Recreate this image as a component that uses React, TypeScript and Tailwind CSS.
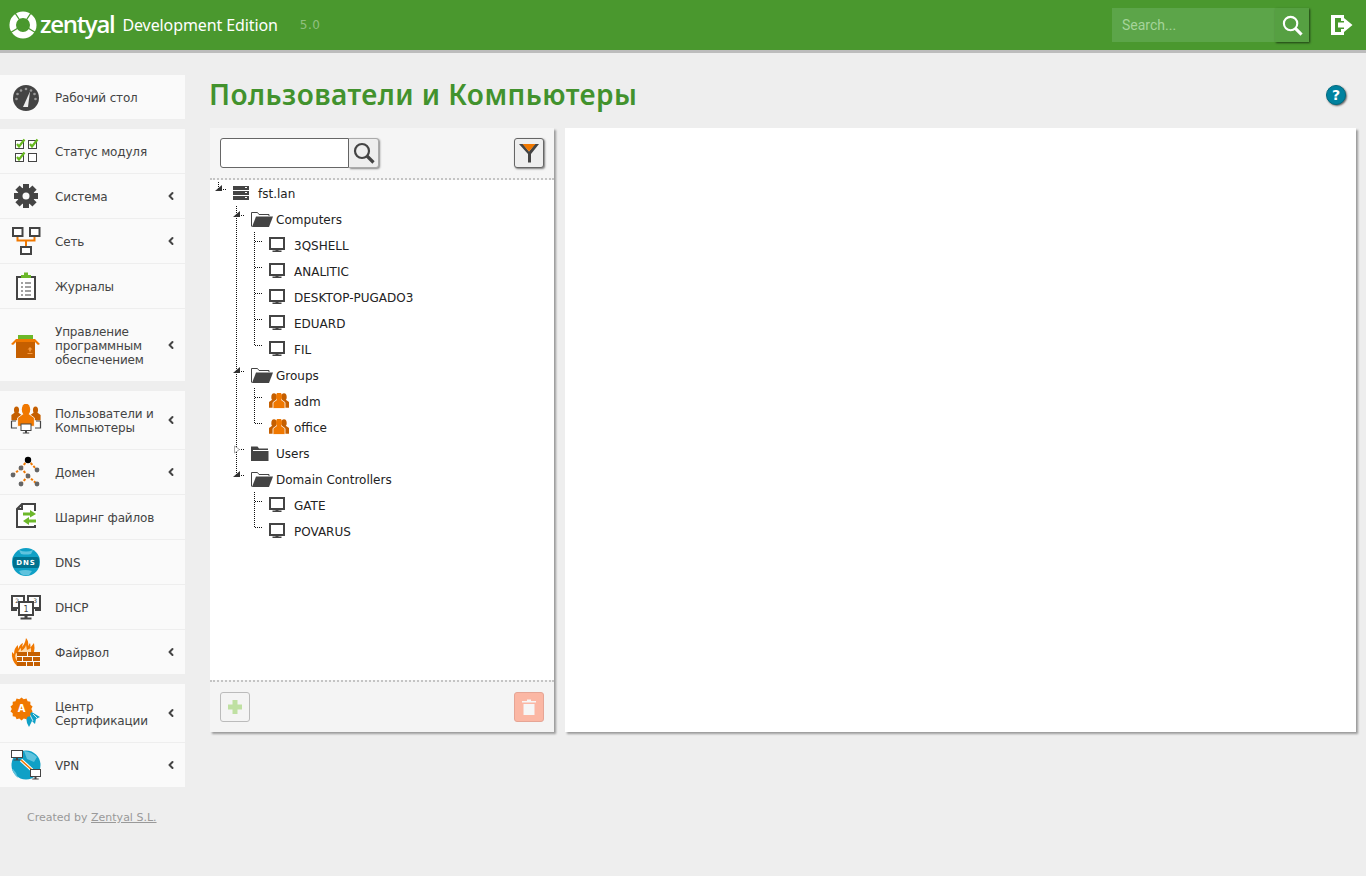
import { ChevronLeft } from "lucide-react";
import type { ReactNode } from "react";

const Ico = ({ children }: { children: ReactNode }) => (
  <svg width="32" height="32" viewBox="0 0 32 32" className="block">
    {children}
  </svg>
);

const GaugeIcon = () => (
  <Ico>
    <circle cx="16" cy="17" r="13" fill="#444" />
    {[[6.5, 18], [7.5, 13], [11, 9.5], [16, 8], [21, 9.5], [24.5, 13], [25.5, 18]].map(([x, y], i) => (
      <circle key={i} cx={x} cy={y} r="1.3" fill="#999" />
    ))}
    <path d="M13 26 L20 10.5 L18 26 Z" fill="#eee" />
  </Ico>
);

const CheckBox = ({ x, y, on }: { x: number; y: number; on: boolean }) => (
  <g>
    <rect x={x + 0.5} y={y + 1.5} width="8" height="8" fill="#fff" stroke="#444" />
    {on && <path d={`M${x + 2} ${y + 5} l2 2.5 l5.5 -7`} fill="none" stroke="#66b81f" strokeWidth="2.2" />}
  </g>
);

const StatusIcon = () => (
  <Ico>
    <CheckBox x={5} y={4} on />
    <CheckBox x={18} y={4} on />
    <CheckBox x={5} y={17} on />
    <CheckBox x={18} y={17} on={false} />
  </Ico>
);

const GearIcon = () => (
  <Ico>
    {[0, 45, 90, 135].map((r) => (
      <rect key={r} x="13" y="4" width="6" height="24" fill="#444" transform={`rotate(${r} 16 16)`} />
    ))}
    <circle cx="16" cy="16" r="8.5" fill="#444" />
    <circle cx="16" cy="16" r="3.5" fill="#fafafa" />
  </Ico>
);

const NetIcon = () => (
  <Ico>
    <rect x="3" y="3" width="9.5" height="8" fill="#fff" stroke="#444" strokeWidth="2" />
    <rect x="20" y="3" width="9.5" height="8" fill="#fff" stroke="#444" strokeWidth="2" />
    <rect x="11" y="22" width="10" height="7" fill="#fff" stroke="#444" strokeWidth="2" />
    <path d="M7.5 12 V15.5 H24.5 V12 M16 15.5 V21" fill="none" stroke="#f07800" strokeWidth="2" />
  </Ico>
);

const JournalIcon = () => (
  <Ico>
    <rect x="7" y="7" width="18" height="22" fill="#fff" stroke="#444" strokeWidth="2" />
    <path d="M11 8 V5 H14 V2.5 H18 V5 H21 V8 Z" fill="#6cb82a" />
    <path d="M11 13 h2 M15 13 h6 M11 17 h2 M15 17 h6 M11 21 h2 M15 21 h6 M11 25 h2 M15 25 h6" stroke="#444" strokeWidth="1.2" />
  </Ico>
);

const BoxIcon = () => (
  <Ico>
    <rect x="8" y="6" width="15" height="4" fill="#6cb82a" />
    <rect x="6" y="10" width="19" height="19" fill="#c55f00" />
    <path d="M6 10 H25 L30 15 L28 16 L25 13 H6 L3 16 L1 15 Z" fill="#f07800" />
    <path d="M20 18 l-2.5 2.5 h1.7 v2 h1.6 v-2 h1.7 Z M17.5 24 h5 v1 h-5 Z" fill="#f79a3e" />
  </Ico>
);

const Person = ({ x, y, s, fill, ring }: { x: number; y: number; s: number; fill: string; ring?: boolean }) => (
  <g fill={fill} stroke={ring ? "#fff" : "none"} strokeWidth={ring ? 0.8 : 0}>
    <path d={`M${x - 2 * s} ${y + 3 * s} L${x - 6 * s} ${y + 6 * s} V${y + 12 * s} H${x + 6 * s} V${y + 6 * s} L${x + 2 * s} ${y + 3 * s} Z`} />
    <ellipse cx={x} cy={y} rx={3 * s} ry={4.2 * s} stroke="none" />
  </g>
);

const Mon = ({ x, y, w, h, sw = 1 }: { x: number; y: number; w: number; h: number; sw?: number }) => (
  <g>
    <rect x={x + sw / 2} y={y + sw / 2} width={w - sw} height={h - sw} fill="#fff" stroke="#444" strokeWidth={sw} />
    <path d={`M${x + w / 2 - 1} ${y + h} h2 v1.5 h${w / 5} v1 h-${2 + (2 * w) / 5} v-1 h${w / 5} Z`} fill="#444" />
  </g>
);

const UsersCompIcon = () => (
  <Ico>
    <Person x={6.5} y={6} s={0.85} fill="#c55f00" />
    <Person x={25.5} y={6} s={0.85} fill="#c55f00" />
    <Person x={16} y={5.5} s={1.4} fill="#f07800" ring />
    <path d="M1.5 17 H6 M1.5 17 V24 H7 M30.5 17 H26 M30.5 17 V24 H25" fill="none" stroke="#444" strokeWidth="1.2" />
    <Mon x={10.5} y={19.5} w={11} h={7.5} />
  </Ico>
);

const DomainIcon = () => {
  const lines = [[18, 4, 11, 12], [18, 4, 27, 14], [11, 12, 3, 19], [11, 12, 18, 20], [18, 20, 11, 28], [18, 20, 27, 28]];
  const nodes = [[11, 12], [27, 14], [3, 19], [18, 20], [11, 28], [27, 28]];
  return (
    <Ico>
      {lines.map(([a, b, c, d], i) => (
        <line key={i} x1={a} y1={b} x2={c} y2={d} stroke="#f07800" strokeWidth="2" strokeDasharray="2.5 1.5" />
      ))}
      {nodes.map(([x, y], i) => (
        <circle key={i} cx={x} cy={y} r="2.4" fill="#666" />
      ))}
      <circle cx="18" cy="4" r="3.2" fill="#000" />
    </Ico>
  );
};

const ShareIcon = () => (
  <Ico>
    <path d="M12 3 H25 V26 H7 V8 Z M12 3 V8 H7" fill="#fff" stroke="#444" strokeWidth="2" />
    <rect x="13" y="10" width="14" height="14" fill="#fff" />
    <path d="M20 9 L26 13 L20 16.5 V14.5 H13 V11.5 H20 Z" fill="#6cb82a" />
    <path d="M19 16 L13 20 L19 24 V21.5 H26 V18.5 H19 Z" fill="#6cb82a" />
  </Ico>
);

const DnsIcon = () => (
  <Ico>
    <circle cx="16" cy="16" r="14" fill="#0fa0c6" />
    <path d="M9 4 Q16 7 23 4 L21 8 Q16 9 11 8 Z M9 25 Q15 23 22 25 L19 29 Q14 30 11 28 Z" fill="#5fc3de" />
    <rect x="3" y="11" width="26" height="11" rx="2" fill="#00718e" />
    <text x="16" y="19" textAnchor="middle" fill="#fff" fontSize="7" fontWeight="700" letterSpacing="1" fontFamily="'DejaVu Sans', sans-serif">
      DNS
    </text>
  </Ico>
);

const DhcpIcon = () => (
  <Ico>
    <rect x="2" y="5" width="12" height="12" fill="#fff" stroke="#444" strokeWidth="2" />
    <rect x="18" y="5" width="12" height="12" fill="#fff" stroke="#444" strokeWidth="2" />
    <text x="7" y="12" textAnchor="middle" fontSize="6" fill="#444" fontFamily="'DejaVu Sans', sans-serif">2</text>
    <text x="25" y="12" textAnchor="middle" fontSize="6" fill="#444" fontFamily="'DejaVu Sans', sans-serif">3</text>
    <path d="M1 19 h6 M25 19 h6" stroke="#444" strokeWidth="2" />
    <rect x="9" y="11" width="14" height="13" fill="#fff" stroke="#444" strokeWidth="2" />
    <text x="16" y="21" textAnchor="middle" fontSize="8" fill="#444" fontFamily="'DejaVu Sans', sans-serif">1</text>
    <path d="M14.5 24 h3 v2.5 h4 v2 h-11 v-2 h4 Z" fill="#444" />
  </Ico>
);

const FireIcon = () => (
  <Ico>
    <path d="M7 30 Q1 24 2 16 L4 18 Q4 12 8 9 L8 13 Q10 8 13 7 L12 11 Q15 8 16 2 Q19 5 18 10 L20 7 Q21 11 20 12 L24 7 Q25 12 24 16 H7 Z" fill="#f07800" />
    <path d="M7 25 Q4 21 6 17 L8 18 Q8 14 11 12 L11 15 Q15 13 16 9 L17 14 L21 12 V16 H7 Z" fill="#ffd9a8" />
    <g fill="#c55f00">
      <rect x="7" y="16" width="10" height="4" />
      <rect x="18" y="16" width="12" height="4" />
      <rect x="7" y="21" width="5" height="4" />
      <rect x="13" y="21" width="9" height="4" />
      <rect x="23" y="21" width="7" height="4" />
      <rect x="7" y="26" width="9" height="4" />
      <rect x="17" y="26" width="6" height="4" />
      <rect x="24" y="26" width="6" height="4" />
    </g>
  </Ico>
);

const CertIcon = () => (
  <Ico>
    <path d="M16 20 L20 14 L30 20 L26 22 L25 27 L22 24 L19 30 L17 26 Z" fill="#0fa0c6" />
    <path d="M20 18 L23 24 M23 17 L27 21" stroke="#fff" strokeWidth="0.8" />
    <path d="M12 0.5 l2.4 2 3-.8 1.2 2.9 3 .6 0 3.1 2.4 2 -1.4 2.7 1.4 2.7 -2.4 2 0 3.1 -3 .6 -1.2 2.9 -3 -.8 -2.4 2 -2.4 -2 -3 .8 -1.2 -2.9 -3 -.6 0 -3.1 -2.4 -2 1.4 -2.7 -1.4 -2.7 2.4 -2 0 -3.1 3 -.6 1.2 -2.9 3 .8 Z" fill="#f07800" transform="translate(0.5 0) scale(0.92)" />
    <text x="11.5" y="15" textAnchor="middle" fontSize="10" fontWeight="700" fill="#fff" fontFamily="'DejaVu Sans', sans-serif">A</text>
  </Ico>
);

const VpnIcon = () => (
  <Ico>
    <circle cx="16" cy="16" r="14.5" fill="#0fa0c6" />
    <path d="M14 2 Q22 3 27 8 L24 13 L17 10 Z M3 20 Q7 24 8 29 Q4 26 2 20 Z" fill="#5fc3de" />
    <path d="M11 11 L22 21" stroke="#fff" strokeWidth="3.5" />
    <path d="M11 11 L22 21" stroke="#f07800" strokeWidth="1.5" />
    <Mon x={1} y={1} w={12} h={8} />
    <Mon x={20} y={20} w={11} h={8} />
  </Ico>
);

type MenuItem = { label: ReactNode; icon: ReactNode; arrow?: boolean };

const groups: MenuItem[][] = [
  [{ label: "Рабочий стол", icon: <GaugeIcon /> }],
  [
    { label: "Статус модуля", icon: <StatusIcon /> },
    { label: "Система", icon: <GearIcon />, arrow: true },
    { label: "Сеть", icon: <NetIcon />, arrow: true },
    { label: "Журналы", icon: <JournalIcon /> },
    { label: <>Управление<br />программным<br />обеспечением</>, icon: <BoxIcon />, arrow: true },
  ],
  [
    { label: <>Пользователи и<br />Компьютеры</>, icon: <UsersCompIcon />, arrow: true },
    { label: "Домен", icon: <DomainIcon />, arrow: true },
    { label: "Шаринг файлов", icon: <ShareIcon /> },
    { label: "DNS", icon: <DnsIcon /> },
    { label: "DHCP", icon: <DhcpIcon /> },
    { label: "Файрвол", icon: <FireIcon />, arrow: true },
  ],
  [
    { label: <>Центр<br />Сертификации</>, icon: <CertIcon />, arrow: true },
    { label: "VPN", icon: <VpnIcon />, arrow: true },
  ],
];

const Sidebar = () => (
  <aside className="w-[185px] shrink-0 pt-[22px]">
    {groups.map((group, g) => (
      <div key={g} className="mb-[10px] bg-[#fafafa]">
        {group.map((item, i) => (
          <div
            key={i}
            className={`flex items-center pb-[14px] pt-[16px] text-[12px] leading-[14px] tracking-[-0.15px] text-[#444] ${i < group.length - 1 ? "border-b border-[#eeeeee]" : ""}`}
          >
            <span className="relative h-[14px] w-[55px] shrink-0">
              <span className="absolute left-[10px] top-[-10px] flex h-[32px] w-[32px] items-center justify-center">{item.icon}</span>
            </span>
            <span className="flex-1">{item.label}</span>
            {item.arrow && <ChevronLeft size={12} strokeWidth={4} color="#444" className="mr-[8px] mt-[-2px]" />}
          </div>
        ))}
      </div>
    ))}
    <p className="pl-[27px] pt-[14px] text-[11px] leading-[14px] text-[#999]">
      Created by <a className="underline">Zentyal S.L.</a>
    </p>
  </aside>
);

type Guide = "none" | "line" | "open" | "closed" | "branch" | "last" | "openlast" | "rootopen";

const dots = "#111";

const GuideCell = ({ kind }: { kind: Guide }) => (
  <svg width="18" height="26" viewBox="0 0 18 26" className="block shrink-0">
    {(kind === "line" || kind === "open" || kind === "closed" || kind === "branch") && (
      <line x1="8.5" y1="0" x2="8.5" y2="26" stroke={dots} strokeDasharray="1 1" />
    )}
    {(kind === "last" || kind === "openlast") && <line x1="8.5" y1="0" x2="8.5" y2="9" stroke={dots} strokeDasharray="1 1" />}
    {kind === "rootopen" && <line x1="8.5" y1="2" x2="8.5" y2="9" stroke={dots} strokeDasharray="1 1" />}
    {kind !== "none" && kind !== "line" && <line x1="9" y1="9.5" x2="16" y2="9.5" stroke={dots} strokeDasharray="1 1" />}
    {(kind === "open" || kind === "openlast" || kind === "rootopen") && <path d="M5 11 L12 5 V11 Z" fill="#333" />}
    {kind === "closed" && <path d="M6.5 6 L11.5 9.5 L6.5 13 Z" fill="#fff" stroke="#aaa" />}
  </svg>
);

const ServerIcon = () => (
  <svg width="16" height="16" viewBox="0 0 16 16" className="block">
    <g fill="#444">
      <rect y="1" width="16" height="4" />
      <rect y="6" width="16" height="4" />
      <rect y="11" width="16" height="4" />
    </g>
    <path d="M12 2.5 h2 M12 7.5 h2 M12 12.5 h2" stroke="#fff" />
  </svg>
);

const FolderOpenIcon = () => (
  <svg width="22" height="15" viewBox="0 0 22 15" className="block">
    <path d="M0.5 14.5 V0.5 H6.5 L8 2.5 H18 V4" fill="none" stroke="#444" />
    <path d="M1 15 L5 4.5 H22 L18 15 Z" fill="#444" />
  </svg>
);

const FolderIcon = () => (
  <svg width="18" height="15" viewBox="0 0 18 15" className="block">
    <path d="M0 15 V0.5 H6.5 L8 2.5 H17 V4 H2 V15 Z" fill="#444" />
    <rect x="2" y="5" width="15.5" height="10" fill="#444" />
  </svg>
);

const MonitorIcon = () => (
  <svg width="16" height="16" viewBox="0 0 16 16" className="block">
    <rect x="1" y="1" width="14" height="11" fill="#fff" stroke="#444" strokeWidth="2" />
    <path d="M6.5 12 h3 v1.5 h3 v1.5 h-9 v-1.5 h3 Z" fill="#444" />
  </svg>
);

const GroupIcon = () => (
  <svg width="20" height="16" viewBox="0 0 20 16" className="block">
    <Person x={5} y={4} s={0.9} fill="#c55f00" />
    <Person x={15} y={4} s={0.9} fill="#c55f00" />
    <Person x={10} y={3.5} s={1} fill="#f07800" ring />
  </svg>
);

type TreeNode = { guides: Guide[]; width: number; icon: ReactNode; label: string };

const depth2 = (first: Guide, second: Guide, icon: ReactNode, label: string): TreeNode => ({
  guides: ["none", first, second],
  width: 25,
  icon,
  label,
});

const depth1 = (kind: Guide, icon: ReactNode, label: string): TreeNode => ({
  guides: ["none", kind],
  width: 25,
  icon,
  label,
});

const tree: TreeNode[] = [
  { guides: ["rootopen"], width: 25, icon: <ServerIcon />, label: "fst.lan" },
  depth1("open", <FolderOpenIcon />, "Computers"),
  depth2("line", "branch", <MonitorIcon />, "3QSHELL"),
  depth2("line", "branch", <MonitorIcon />, "ANALITIC"),
  depth2("line", "branch", <MonitorIcon />, "DESKTOP-PUGADO3"),
  depth2("line", "branch", <MonitorIcon />, "EDUARD"),
  depth2("line", "last", <MonitorIcon />, "FIL"),
  depth1("open", <FolderOpenIcon />, "Groups"),
  depth2("line", "branch", <GroupIcon />, "adm"),
  depth2("line", "last", <GroupIcon />, "office"),
  depth1("closed", <FolderIcon />, "Users"),
  depth1("openlast", <FolderOpenIcon />, "Domain Controllers"),
  depth2("none", "branch", <MonitorIcon />, "GATE"),
  depth2("none", "last", <MonitorIcon />, "POVARUS"),
];

const Magnifier = ({ color, size }: { color: string; size: number }) => (
  <svg width={size} height={size} viewBox="0 0 22 22" className="block">
    <circle cx="9" cy="9" r="7" fill="none" stroke={color} strokeWidth="2.2" />
    <path d="M14 14 L20.5 20.5" stroke={color} strokeWidth="3.2" />
  </svg>
);

const TreePanel = () => (
  <section className="flex h-[604px] w-[344px] shrink-0 flex-col bg-white shadow-[2px_2px_2px_rgba(0,0,0,0.35)]">
    <div className="flex h-[52px] items-center justify-between border-b-2 border-dotted border-[#c4c4c4] bg-[#f5f5f5] px-[10px]">
      <div className="flex">
        <input className="h-[30px] w-[129px] rounded-l-[3px] border border-[#666] bg-white" />
        <button className="flex h-[30px] w-[30px] items-center justify-center rounded-r-[3px] border border-l-0 border-[#aaa] bg-[#eeeeee] shadow-[1px_1px_2px_rgba(0,0,0,0.45)]">
          <Magnifier color="#444" size={22} />
        </button>
      </div>
      <button className="flex h-[30px] w-[30px] items-center justify-center rounded-[3px] border border-[#666] bg-[#eeeeee] shadow-[1px_1px_2px_rgba(0,0,0,0.5)]">
        <svg width="20" height="20" viewBox="0 0 20 20" className="block">
          <path d="M0 1 H4 L10 8.5 L16 1 H20 L12 11 V19.5 H9 V11 Z" fill="#444" />
          <path d="M3.5 1 H16.5 L10 8.5 Z" fill="#f07800" />
        </svg>
      </button>
    </div>
    <div className="flex-1">
      {tree.map((n, i) => (
        <div key={i} className="flex h-[26px] items-center text-[12px] text-[#222]">
          {n.guides.map((g, j) => (
            <GuideCell key={j} kind={g} />
          ))}
          <span className="ml-[5px] flex" style={{ width: n.width }}>
            {n.icon}
          </span>
          <span className="pt-[2px]">{n.label}</span>
        </div>
      ))}
    </div>
    <div className="flex h-[52px] items-center justify-between border-t-2 border-dotted border-[#c4c4c4] bg-[#f4f4f4] px-[10px]">
      <button className="flex h-[30px] w-[30px] items-center justify-center rounded-[3px] border border-[#bbb]">
        <svg width="14" height="14" viewBox="0 0 14 14" className="block">
          <path d="M4.5 0 H9.5 V4.5 H14 V9.5 H9.5 V14 H4.5 V9.5 H0 V4.5 H4.5 Z" fill="#bfe0a2" />
        </svg>
      </button>
      <button className="flex h-[30px] w-[30px] items-center justify-center rounded-[3px] border border-[#e6a595] bg-[#fbb7a4]">
        <svg width="14" height="16" viewBox="0 0 14 16" className="block">
          <path d="M0 2 H5 V0.5 H9 V2 H14 V3.5 H0 Z M1.5 5 H12.5 V16 H1.5 Z" fill="#f6f6f6" />
        </svg>
      </button>
    </div>
  </section>
);

export default function App() {
  return (
    <div className="min-h-[876px] bg-[#eeeeee] font-['DejaVu_Sans',sans-serif]">
      <header className="flex h-[53px] items-center border-b-[3px] border-[#bcbcbc] bg-[#4a982e] text-white">
        <div className="ml-[9px] flex items-center">
          <svg width="28" height="28" viewBox="0 0 30 30" className="block">
            <circle cx="15" cy="15" r="11" fill="none" stroke="#fff" strokeWidth="7" />
            <path d="M15 15 L5 0 M15 15 L25 0 M15 15 L0 24 M15 15 L30 24" stroke="#4a982e" strokeWidth="1.4" />
          </svg>
          <span className="ml-[3px] pb-[2px] font-['Open_Sans',sans-serif] text-[24px] font-semibold leading-none tracking-[-1.3px]">zentyal</span>
        </div>
        <span className="ml-[8px] font-['Noto_Sans',sans-serif] text-[16px] tracking-[-0.1px]">Development Edition</span>
        <span className="ml-[22px] text-[12px] tracking-[0.5px] text-white/40">5.0</span>
        <div className="ml-auto flex h-[34px] w-[197px] items-center bg-[#5ca549]">
          <span className="flex-1 pl-[10px] font-['Roboto',sans-serif] text-[14px] text-[#a5d49a]">Search...</span>
          <button className="flex h-[34px] w-[34px] items-center justify-center bg-[#56a042] shadow-[1px_1px_2px_rgba(0,0,0,0.6)]">
            <Magnifier color="#fff" size={21} />
          </button>
        </div>
        <svg width="22" height="22" viewBox="0 0 22 22" className="ml-[22px] mr-[13px] block">
          <path d="M0 1 H13 V7 H10 V4 H4 V18 H10 V15 H13 V21 H0 Z" fill="#fff" />
          <path d="M7 8.5 H13 V4 L21.5 11 L13 18 V13.5 H7 Z" fill="#fff" />
        </svg>
      </header>
      <div className="flex">
        <Sidebar />
        <main className="min-w-0 flex-1 pl-[25px] pr-[10px]">
          <div className="flex h-[75px] items-start justify-between pt-[23px]">
            <h1 className="ml-[-1px] font-['Noto_Sans',sans-serif] text-[28px] font-semibold leading-[36px] tracking-[0.45px] text-[#42922d]">Пользователи и Компьютеры</h1>
            <span className="mr-[10px] mt-[9px] flex h-[20px] w-[20px] items-center justify-center rounded-full border border-[#006a80] bg-[#00829f] text-[14px] font-bold leading-none text-white shadow-[1px_1px_2px_rgba(0,0,0,0.6)]">
              ?
            </span>
          </div>
          <div className="flex gap-[11px]">
            <TreePanel />
            <section className="h-[604px] flex-1 bg-white shadow-[2px_2px_2px_rgba(0,0,0,0.35)]" />
          </div>
        </main>
      </div>
    </div>
  );
}
